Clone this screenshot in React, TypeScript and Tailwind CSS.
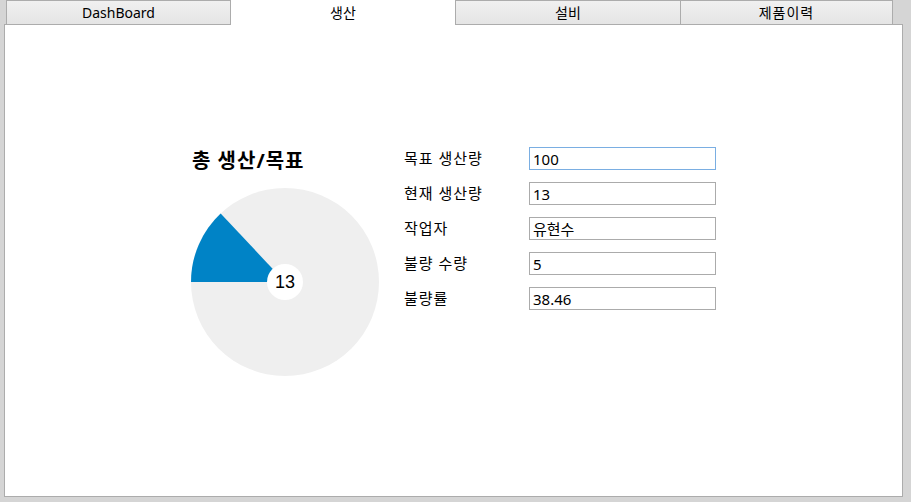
const font = { fontFamily: '"Noto Sans", "Noto Sans CJK KR", sans-serif' };

const tabs = ["DashBoard", "생산", "설비", "제품이력"];

const fields = [
  { label: "목표 생산량", value: "100", focused: true },
  { label: "현재 생산량", value: "13" },
  { label: "작업자", value: "유현수" },
  { label: "불량 수량", value: "5" },
  { label: "불량률", value: "38.46" },
];

function Pie({ current, target }: { current: number; target: number }) {
  const cx = 95;
  const cy = 95;
  const r = 94;
  const a = (current / target) * Math.PI * 2;
  const x2 = cx - r * Math.cos(a);
  const y2 = cy - r * Math.sin(a);
  const large = a > Math.PI ? 1 : 0;
  return (
    <div className="relative w-[190px] h-[190px]">
      <svg width="190" height="190" viewBox="0 0 190 190">
        <circle cx={cx} cy={cy} r={r} fill="#efefef" />
        <path d={`M ${cx} ${cy} L ${cx - r} ${cy} A ${r} ${r} 0 ${large} 1 ${x2} ${y2} Z`} fill="#0083c6" />
        <circle cx={cx} cy={cy} r={18} fill="#ffffff" />
      </svg>
      <div
        className="absolute inset-0 flex items-center justify-center text-[18px] text-black"
        style={{ fontFamily: '"Liberation Sans", Arial, sans-serif' }}
      >
        {current}
      </div>
    </div>
  );
}

export default function App() {
  return (
    <div className="w-[911px] h-[502px] bg-[#d5d5d5] overflow-hidden" style={font}>
      <div className="flex pl-[6px] h-[24px] relative z-10">
        {tabs.map((t, i) =>
          i === 1 ? (
            <div
              key={t}
              className="w-[224px] h-[25px] bg-white flex items-center justify-center text-[14px] text-black"
            >
              {t}
            </div>
          ) : (
            <div
              key={t}
              className={`${i === 3 ? "w-[213px] tracking-[1px]" : "w-[225px]"} h-[24px] bg-gradient-to-b from-[#f0f0f0] to-[#e5e5e5] border border-b-0 border-[#acacac] flex items-center justify-center text-[14px] text-black ${i === 2 ? "border-r-0" : ""}`}
            >
              {t}
            </div>
          )
        )}
      </div>
      <div className="ml-[4px] w-[899px] h-[473px] bg-white border border-[#acacac]">
        <div className="flex pt-[122px] pl-[185px]">
          <div className="flex flex-col w-[190px]">
            <div className="pl-[2px] h-[28px] text-[20px] font-bold text-black leading-[28px] tracking-[1px] whitespace-nowrap">총 생산/목표</div>
            <div className="mt-[12px]">
              <Pie current={13} target={100} />
            </div>
          </div>
          <div className="ml-[24px] flex flex-col gap-[12px]">
            {fields.map((f) => (
              <div key={f.label} className="flex items-center h-[23px]">
                <div className="w-[125px] text-[15px] tracking-[1px] text-black">{f.label}</div>
                <input
                  readOnly
                  value={f.value}
                  className={`w-[187px] h-[23px] border px-[3px] text-[15px] text-black outline-none ${f.focused ? "border-[#7aaee2]" : "border-[#ababab]"}`}
                  style={font}
                />
              </div>
            ))}
          </div>
        </div>
      </div>
    </div>
  );
}
